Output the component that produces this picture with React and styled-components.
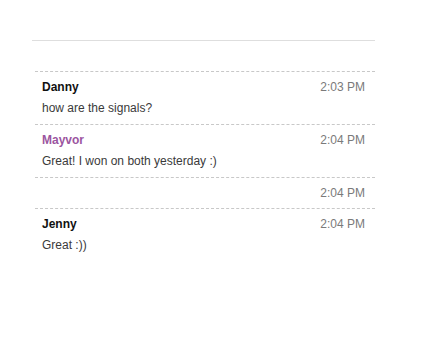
import React from "react";
import styled, { createGlobalStyle } from "styled-components";

const Global = createGlobalStyle`
  html, body { margin: 0; padding: 0; background: #fff; }
  body { font-family: "Liberation Sans", Arial, sans-serif; }
`;

const Page = styled.div`
  padding: 40px 0 0 32px;
  width: 343px;
`;

const Divider = styled.div`
  border-top: 1px solid #dedede;
`;

const List = styled.ul`
  list-style: none;
  margin: 30px 0 0 3px;
  padding: 0;
  width: 340px;
`;

const Row = styled.li`
  border-top: 1px dashed #c8c8c8;
  padding: 7px 10px 7px 7px;
`;

const Header = styled.div`
  display: flex;
  justify-content: space-between;
  align-items: baseline;
  height: 16px;
  line-height: 16px;
  font-size: 12px;
`;

const Name = styled.span`
  font-weight: bold;
  color: ${(p) => p.$color || "#111"};
`;

const Time = styled.span`
  color: #7a7a7a;
`;

const Message = styled.div`
  margin-top: 4px;
  line-height: 18px;
  font-size: 12px;
  color: #3a3a3a;
`;

const messages = [
  { name: "Danny", time: "2:03 PM", text: "how are the signals?" },
  { name: "Mayvor", color: "#9b55a0", time: "2:04 PM", text: "Great! I won on both yesterday :)" },
  { name: "", time: "2:04 PM", text: "" },
  { name: "Jenny", time: "2:04 PM", text: "Great :))" },
];

export default function App() {
  return (
    <>
      <Global />
      <Page>
        <Divider />
        <List>
          {messages.map((m, i) => (
            <Row key={i}>
              <Header>
                <Name $color={m.color}>{m.name}</Name>
                <Time>{m.time}</Time>
              </Header>
              {m.text && <Message>{m.text}</Message>}
            </Row>
          ))}
        </List>
      </Page>
    </>
  );
}
